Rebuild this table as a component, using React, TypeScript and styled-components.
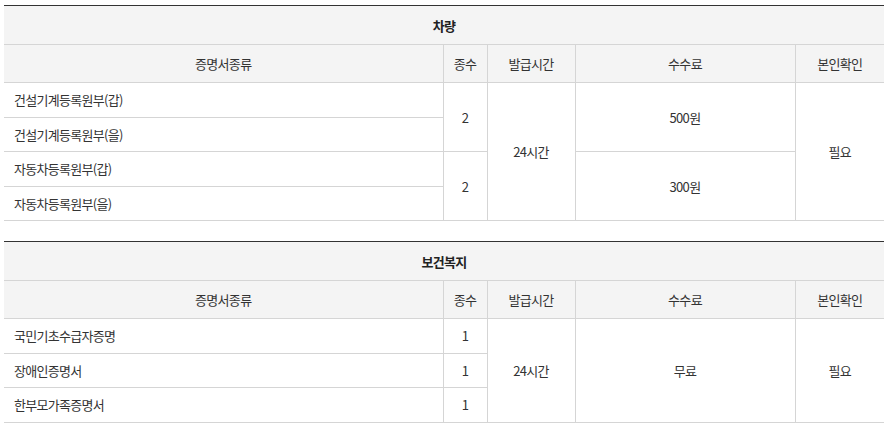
import styled, { createGlobalStyle } from "styled-components";

const GlobalStyle = createGlobalStyle`
  body {
    margin: 0;
    background: #fff;
    font-family: "Noto Sans CJK KR", "Noto Sans", sans-serif;
    color: #333;
  }
`;

const Page = styled.div`
  padding: 5px 4px 0 4px;
  display: flex;
  flex-direction: column;
  gap: 20px;
`;

const Table = styled.table`
  width: 880px;
  border-collapse: collapse;
  table-layout: fixed;
  border-top: 1px solid #333;
  border-bottom: 1px solid #333;
  font-size: 13px;
  line-height: 17px;
  letter-spacing: -0.7px;
`;

const Title = styled.th`
  height: 38px;
  background: #f4f4f4;
  font-weight: 700;
  color: #222;
  border-bottom: 1px solid #d5d5d5;
  padding: 0;
`;

const Head = styled.th`
  height: 37px;
  background: #f4f4f4;
  font-weight: 400;
  color: #333;
  border: 1px solid #d5d5d5;
  border-top: none;
  padding: 0;
  &:first-child { border-left: none; }
  &:last-child { border-right: none; }
`;

const Cell = styled.td<{ $left?: boolean }>`
  height: 33.5px;
  padding: 0 ${(p) => (p.$left ? "10px" : "0")};
  text-align: ${(p) => (p.$left ? "left" : "center")};
  border: 1px solid #d5d5d5;
  color: #333;
  &:first-child { border-left: none; }
  &:last-child { border-right: none; }
`;

const cols = [439, 44, 88, 220, 89];

function Cols() {
  return (
    <colgroup>
      {cols.map((w, i) => (
        <col key={i} style={{ width: w }} />
      ))}
    </colgroup>
  );
}

function HeadRow() {
  return (
    <tr>
      <Head>증명서종류</Head>
      <Head>종수</Head>
      <Head>발급시간</Head>
      <Head>수수료</Head>
      <Head>본인확인</Head>
    </tr>
  );
}

export default function App(): JSX.Element {
  return (
    <Page>
      <GlobalStyle />
      <Table>
        <Cols />
        <thead>
          <tr>
            <Title colSpan={5}>차량</Title>
          </tr>
          <HeadRow />
        </thead>
        <tbody>
          <tr>
            <Cell $left>건설기계등록원부(갑)</Cell>
            <Cell rowSpan={2}>2</Cell>
            <Cell rowSpan={4}>24시간</Cell>
            <Cell rowSpan={2}>500원</Cell>
            <Cell rowSpan={4}>필요</Cell>
          </tr>
          <tr>
            <Cell $left>건설기계등록원부(을)</Cell>
          </tr>
          <tr>
            <Cell $left>자동차등록원부(갑)</Cell>
            <Cell rowSpan={2}>2</Cell>
            <Cell rowSpan={2}>300원</Cell>
          </tr>
          <tr>
            <Cell $left>자동차등록원부(을)</Cell>
          </tr>
        </tbody>
      </Table>
      <Table>
        <Cols />
        <thead>
          <tr>
            <Title colSpan={5}>보건복지</Title>
          </tr>
          <HeadRow />
        </thead>
        <tbody>
          <tr>
            <Cell $left>국민기초수급자증명</Cell>
            <Cell>1</Cell>
            <Cell rowSpan={3}>24시간</Cell>
            <Cell rowSpan={3}>무료</Cell>
            <Cell rowSpan={3}>필요</Cell>
          </tr>
          <tr>
            <Cell $left>장애인증명서</Cell>
            <Cell>1</Cell>
          </tr>
          <tr>
            <Cell $left>한부모가족증명서</Cell>
            <Cell>1</Cell>
          </tr>
        </tbody>
      </Table>
    </Page>
  );
}
